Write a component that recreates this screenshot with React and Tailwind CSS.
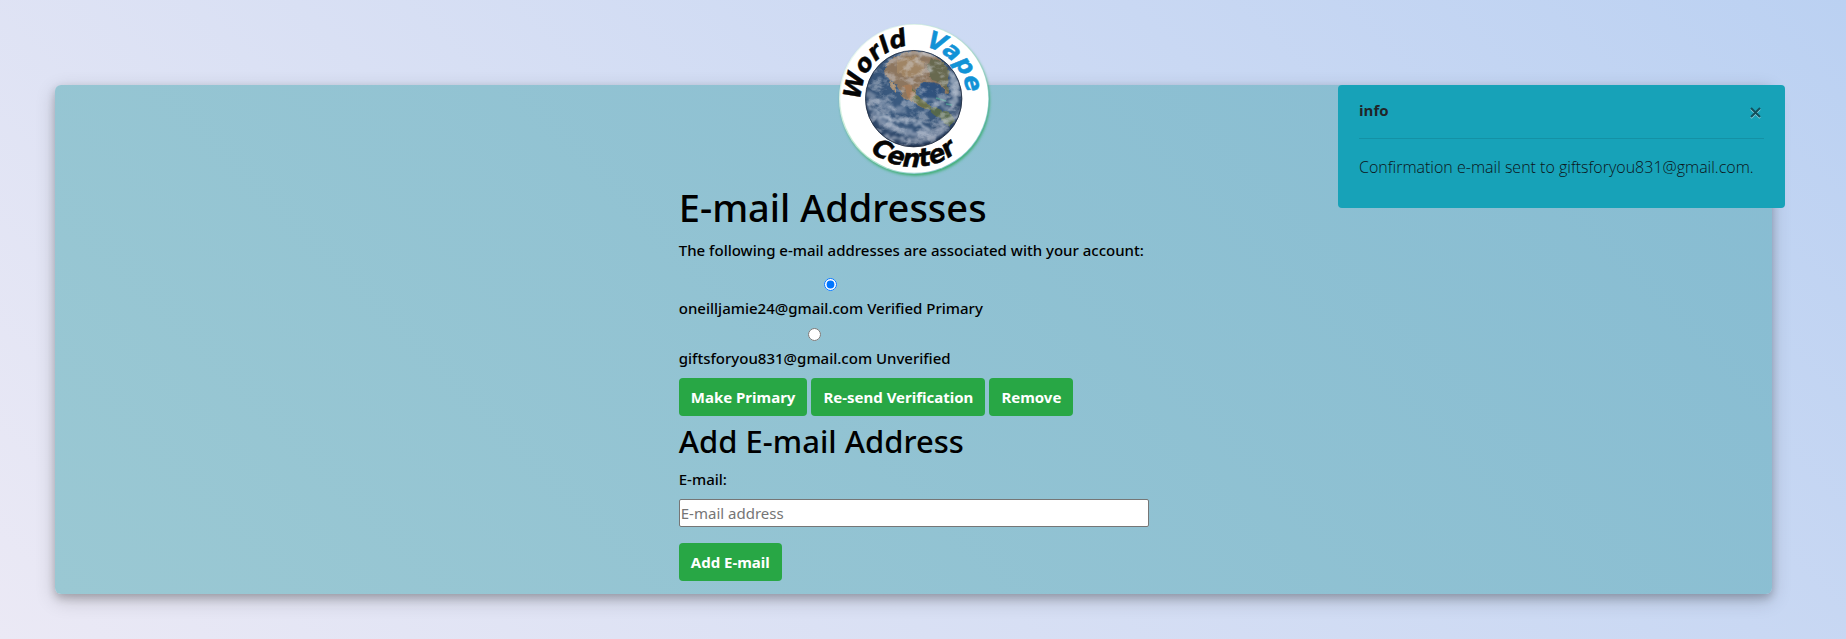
function Logo() {
  return (
    <svg
      viewBox="0 0 150 150"
      role="img"
      aria-label="World Vape Center"
      className="size-[150px] overflow-visible"
    >
      <defs>
        <linearGradient id="rim" x1="0" y1="0" x2="1" y2="1">
          <stop offset="0" stopColor="#ffffff" />
          <stop offset="0.5" stopColor="#b7e6cc" />
          <stop offset="1" stopColor="#6fb7d0" />
        </linearGradient>
        <radialGradient id="ocean" cx="0.48" cy="0.42" r="0.58">
          <stop offset="0" stopColor="#3d5f86" />
          <stop offset="0.7" stopColor="#375478" />
          <stop offset="0.93" stopColor="#2b4263" />
          <stop offset="1" stopColor="#16253f" />
        </radialGradient>
        <clipPath id="globe">
          <circle cx="74.7" cy="74.7" r="48.3" />
        </clipPath>
        <filter id="glow" x="-20%" y="-20%" width="140%" height="140%">
          <feGaussianBlur stdDeviation="1.5" />
        </filter>
        <filter id="rough" x="-10%" y="-10%" width="120%" height="120%">
          <feTurbulence type="fractalNoise" baseFrequency="0.14" numOctaves="3" seed="4" result="n" />
          <feDisplacementMap in="SourceGraphic" in2="n" scale="5" xChannelSelector="R" yChannelSelector="G" />
        </filter>
        <filter id="swirl" x="-10%" y="-10%" width="120%" height="120%">
          <feTurbulence type="fractalNoise" baseFrequency="0.2" numOctaves="4" seed="9" result="n" />
          <feDisplacementMap in="SourceGraphic" in2="n" scale="10" xChannelSelector="R" yChannelSelector="G" />
          <feGaussianBlur stdDeviation="0.8" />
        </filter>
        <filter id="clouds" x="0" y="0" width="100%" height="100%">
          <feTurbulence type="fractalNoise" baseFrequency="0.09 0.12" numOctaves="5" seed="11" />
          <feColorMatrix values="0 0 0 0 0.72  0 0 0 0 0.74  0 0 0 0 0.8  4 0 0 0 -1.8" />
        </filter>
      </defs>
      <circle cx="76" cy="77" r="74.5" fill="#35ad68" filter="url(#glow)" />
      <circle cx="75" cy="75" r="75" fill="url(#rim)" />
      <circle cx="75.3" cy="74.8" r="74" fill="#fff" />
      <g clipPath="url(#globe)">
        <rect x="26" y="26" width="98" height="98" fill="url(#ocean)" />
        <g filter="url(#rough)">
          <path
            d="M46 44 L52 34 L66 28 L84 27 L100 34 L110 48 L108 58 L110 69 L106 70 L101 60 L91 58 L82 59 L77 66 L76 74 L82 78 L88 80 L95 86 L91 86 L82 82 L72 77 L64 73 L57 62 L52 56 L47 52 Z"
            fill="#8d765f"
          />
          <path d="M92 34 L104 38 L111 48 L109 60 L110 70 L106 66 L101 58 L93 56 L88 46 Z" fill="#67694f" />
          <path d="M74 64 L78 72 L88 79 L95 87 L88 85 L74 77 L68 70 Z" fill="#6b7049" />
          <path d="M64 62 L72 60 L76 72 L70 75 Z" fill="#a27a58" />
          <path d="M51 56 L56 62 L58 70 L55 67 L50 60 Z" fill="#a98f70" />
          <path d="M88 84 L98 84 L112 90 L116 96 L110 104 L102 96 L94 89 Z" fill="#56674c" />
          <path d="M58 36 L76 32 L86 38 L84 50 L70 54 L58 48 Z" fill="#a08565" />
        </g>
        <path d="M82 60 Q90 56 101 60 Q105 68 99 73 Q88 76 82 70 Z" fill="#2c4f7c" opacity="0.7" />
        <path d="M97 74 L107 77 M107 80 L113 81" stroke="#4a9590" strokeWidth="1.5" fill="none" />
        <rect x="26" y="26" width="98" height="98" filter="url(#clouds)" opacity="0.4" />
        <g filter="url(#swirl)" fill="none" stroke="#d3dae6" strokeLinecap="round">
          <path d="M29 80 Q42 96 62 97 Q78 96 90 106" strokeWidth="3" opacity="0.7" />
          <path d="M34 92 Q54 106 76 110 Q94 112 106 104" strokeWidth="6" opacity="0.45" />
          <path d="M48 112 Q70 119 94 115" strokeWidth="4" opacity="0.5" />
          <path d="M30 70 Q42 84 62 86" strokeWidth="7" opacity="0.35" />
          <path d="M112 50 Q120 64 114 80" strokeWidth="6" opacity="0.55" />
          <path d="M84 76 Q98 74 112 88" strokeWidth="4" opacity="0.4" />
          <path d="M60 31 Q78 26 96 32" strokeWidth="3" opacity="0.5" />
          <path d="M76 38 Q86 40 94 46" strokeWidth="2" opacity="0.4" />
          <path d="M100 98 Q110 100 118 90" strokeWidth="4" opacity="0.45" />
        </g>
      </g>
      <circle cx="74.7" cy="74.7" r="48.2" fill="none" stroke="#1f2c40" strokeWidth="1" opacity="0.8" />
      <path id="upper" d="M22.2 79 A53 53 0 1 1 127.8 79" fill="none" />
      <path id="lower" d="M7 75 A68 68 0 0 0 143 75" fill="none" />
      <g className="font-['DejaVu_Sans',sans-serif] font-bold italic" strokeWidth="0.5">
        <text fontSize="24" fill="#050505" stroke="#050505">
          <textPath href="#upper" startOffset="3">World</textPath>
        </text>
        <text fontSize="24" fill="#1292d6" stroke="#1292d6">
          <textPath href="#upper" startOffset="99">Vape</textPath>
        </text>
        <text fontSize="25" fill="#050505" stroke="#050505" textAnchor="middle">
          <textPath href="#lower" startOffset="50%">Center</textPath>
        </text>
      </g>
    </svg>
  );
}

function GreenButton({ children }) {
  return (
    <button
      type="button"
      className="h-[38px] rounded bg-[#28a745] px-3 text-[15px] leading-6 font-bold whitespace-nowrap text-white"
    >
      {children}
    </button>
  );
}

function EmailOption({ id, label, defaultChecked }) {
  return (
    <div className="flex w-fit flex-col">
      <input
        id={id}
        type="radio"
        name="email"
        defaultChecked={defaultChecked}
        className="mt-1 mb-[5px] size-[13px] self-center"
      />
      <label htmlFor={id} className="mb-1 leading-6">
        {label}
      </label>
    </div>
  );
}

function Toast() {
  return (
    <section
      role="status"
      className="absolute top-[85px] right-[61px] w-[447px] rounded bg-[#17a2b8] px-[21px] py-[9px] text-[#212529]"
    >
      <div className="flex items-center justify-between border-b border-black/10 pb-3">
        <strong className="text-[15px] leading-8 font-bold">info</strong>
        <button type="button" aria-label="Close" className="px-[2px] pt-1">
          <svg viewBox="0 0 13 13" className="size-[13px]" fill="none" strokeWidth="2">
            <path d="M2 3 L11 12 M11 3 L2 12" stroke="#8fd0db" />
            <path d="M2 2 L11 11 M11 2 L2 11" stroke="#12505c" />
          </svg>
        </button>
      </div>
      <p className="pt-4 pb-5 text-base leading-6 font-light whitespace-nowrap text-[#0c1418]">
        Confirmation e-mail sent to giftsforyou831@gmail.com.
      </p>
    </section>
  );
}

export default function App() {
  return (
    <div className="relative min-h-screen bg-linear-45 from-[#ebe9f5] to-[#bbd1f2] pt-6 pb-[45px] font-['Open_Sans','Noto_Sans',sans-serif] text-black">
      <main className="mt-[61px] mr-[4%] ml-[3%] flex flex-col items-center rounded-md bg-linear-45 from-[#9ac8d3] to-[#87bcd2] pb-[13px] shadow-[0_4px_8px_rgba(0,0,0,0.2),0_6px_20px_rgba(0,0,0,0.19)]">
        <div className="-mt-[61px]">
          <Logo />
        </div>
        <div className="mt-[9px] w-[470px] max-w-full font-['Noto_Sans',sans-serif] text-[15px] font-medium">
          <h1 className="mb-[7px] text-[38px] leading-[48px] font-medium">E-mail Addresses</h1>
          <p className="mb-3 leading-6 whitespace-nowrap">
            The following e-mail addresses are associated with your account:
          </p>
          <form onSubmit={(e) => e.preventDefault()}>
            <EmailOption id="email-1" label="oneilljamie24@gmail.com Verified Primary" defaultChecked />
            <EmailOption id="email-2" label="giftsforyou831@gmail.com Unverified" />
            <div className="mt-1 flex gap-1">
              <GreenButton>Make Primary</GreenButton>
              <GreenButton>Re-send Verification</GreenButton>
              <GreenButton>Remove</GreenButton>
            </div>
          </form>
          <h2 className="mt-[6px] mb-[7px] text-[31px] leading-[38px] font-medium">Add E-mail Address</h2>
          <form onSubmit={(e) => e.preventDefault()}>
            <label htmlFor="new-email" className="mb-2 block leading-6">
              E-mail:
            </label>
            <input
              id="new-email"
              type="email"
              placeholder="E-mail address"
              className="mb-4 block h-7 w-full rounded-xs border border-[#767676] bg-white px-px text-[15px] font-normal placeholder:text-[#757575]"
            />
            <GreenButton>Add E-mail</GreenButton>
          </form>
        </div>
      </main>
      <Toast />
    </div>
  );
}
